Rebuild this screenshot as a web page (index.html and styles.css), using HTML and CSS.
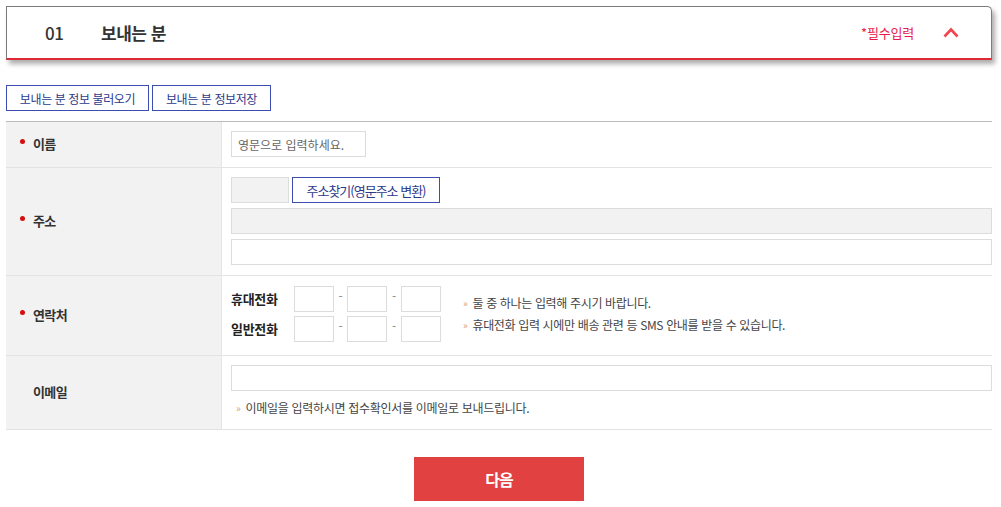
FILE: index.html
```html
<!DOCTYPE html>
<html lang="ko">
<head>
<meta charset="utf-8">
<title>보내는 분</title>
<link rel="stylesheet" href="styles.css">
</head>
<body>
<div class="page">
  <div class="sec-head">
    <span class="sec-num">01</span>
    <span class="sec-title">보내는 분</span>
    <span class="req">*필수입력</span>
    <svg class="chev" width="16" height="11" viewBox="0 0 16 11"><polyline points="1.5,9.5 8,2.5 14.5,9.5" fill="none" stroke="#f0464f" stroke-width="2.6"/></svg>
  </div>

  <div class="tools">
    <button class="btn-line">보내는 분 정보 불러오기</button>
    <button class="btn-line">보내는 분 정보저장</button>
  </div>

  <div class="form">
    <div class="row">
      <div class="th"><span class="dot"></span>이름</div>
      <div class="td">
        <input class="inp name" type="text" placeholder="영문으로 입력하세요.">
      </div>
    </div>
    <div class="row">
      <div class="th"><span class="dot"></span>주소</div>
      <div class="td stack">
        <div class="zip-line">
          <input class="inp zip gray" type="text">
          <button class="btn-line find">주소찾기(영문주소 변환)</button>
        </div>
        <input class="inp full gray" type="text">
        <input class="inp full" type="text">
      </div>
    </div>
    <div class="row">
      <div class="th"><span class="dot"></span>연락처</div>
      <div class="td phone-td">
        <div class="phones">
          <div class="ph-line">
            <span class="ph-label">휴대전화</span>
            <input class="inp ph" type="text"><span class="dash">-</span><input class="inp ph" type="text"><span class="dash">-</span><input class="inp ph" type="text">
          </div>
          <div class="ph-line">
            <span class="ph-label">일반전화</span>
            <input class="inp ph" type="text"><span class="dash">-</span><input class="inp ph" type="text"><span class="dash">-</span><input class="inp ph" type="text">
          </div>
        </div>
        <ul class="notes">
          <li>둘 중 하나는 입력해 주시기 바랍니다.</li>
          <li>휴대전화 입력 시에만 배송 관련 등 SMS 안내를 받을 수 있습니다.</li>
        </ul>
      </div>
    </div>
    <div class="row">
      <div class="th nodot">이메일</div>
      <div class="td email-td">
        <input class="inp full" type="text">
        <ul class="notes email-note">
          <li>이메일을 입력하시면 접수확인서를 이메일로 보내드립니다.</li>
        </ul>
      </div>
    </div>
  </div>

  <div class="actions">
    <button class="btn-next">다음</button>
  </div>
</div>
</body>
</html>
```

FILE: styles.css
```css
* { box-sizing: border-box; }
html, body { margin: 0; padding: 0; background: #fff; }
body {
  font-family: "Noto Sans CJK KR", "Noto Sans", sans-serif;
  color: #333;
  font-size: 12px;
  letter-spacing: -0.4px;
}
.page {
  width: 1001px;
  padding: 6px 9px 0 6px;
}
.sec-head {
  height: 54px;
  border: 1px solid #7c7c7c;
  border-bottom: 2px solid #dd2a36;
  border-radius: 0 5px 0 0;
  box-shadow: 3px 4px 5px rgba(0,0,0,0.33);
  display: flex;
  align-items: center;
  padding: 0 32px 0 38px;
  background: #fff;
}
.sec-num {
  font-size: 17px;
  font-weight: 500;
  color: #333;
  letter-spacing: -0.5px;
  width: 56px;
}
.sec-title {
  font-size: 17px;
  font-weight: 700;
  color: #333;
  letter-spacing: -0.5px;
}
.req {
  margin-left: auto;
  font-size: 13px;
  color: #e8194a;
  letter-spacing: -0.2px;
  margin-right: 29px;
}
.chev { display: block; margin-top: -1px; }

.tools {
  margin-top: 25px;
  display: flex;
  gap: 3px;
}
.btn-line {
  height: 26px;
  border: 1px solid #3c4db2;
  background: #fff;
  color: #2c3a8c;
  font-family: inherit;
  font-size: 12px;
  letter-spacing: -0.4px;
  padding: 0;
  cursor: pointer;
}
.tools .btn-line:first-child { width: 143px; }
.tools .btn-line:last-child { width: 119px; }

.form {
  margin-top: 10px;
  border-top: 1px solid #bbb;
  width: 986px;
}
.row {
  display: grid;
  grid-template-columns: 216px 1fr;
  border-bottom: 1px solid #e3e3e3;
}
.th {
  background: #f2f2f2;
  border-right: 1px solid #e5e5e5;
  display: flex;
  align-items: center;
  padding-left: 14px;
  padding-bottom: 3px;
  font-size: 13px;
  font-weight: 700;
  color: #333;
  letter-spacing: -0.6px;
}
.dot {
  width: 5px;
  height: 5px;
  border-radius: 50%;
  background: #d40f0f;
  margin-right: 8px;
  margin-top: -3px;
}
.th.nodot { padding-left: 27px; }
.td {
  padding: 9px 0 10px 9px;
}
.inp {
  display: block;
  height: 26px;
  border: 1px solid #dcdcdc;
  background: #fff;
  font-family: inherit;
  font-size: 12px;
  letter-spacing: 0;
  color: #333;
  padding: 0 6px;
  outline: none;
}
.inp::placeholder { color: #666; }
.inp.gray { background: #f2f2f2; }
.inp.name { width: 135px; }
.inp.full { width: 761px; }
.stack { display: flex; flex-direction: column; gap: 5px; }
.zip-line { display: flex; gap: 3px; }
.inp.zip { width: 58px; }
.btn-line.find { width: 148px; font-size: 13px; letter-spacing: -1px; }

.phone-td {
  padding: 10px 0 13px 9px;
  display: flex;
  align-items: center;
}
.phones { display: flex; flex-direction: column; gap: 4px; }
.ph-line { display: flex; align-items: center; }
.ph-label {
  width: 63px;
  font-size: 13px;
  font-weight: 700;
  color: #222;
  letter-spacing: -0.3px;
  padding-bottom: 2px;
}
.inp.ph { width: 40px; }
.dash {
  width: 14px;
  text-align: center;
  color: #888;
  font-size: 12px;
  margin-top: -7px;
}
.ph-line .dash:nth-of-type(2) { width: 13px; }

.notes {
  list-style: none;
  margin: 0 0 0 22px;
  padding: 0;
  color: #444;
  font-size: 12px;
  line-height: 21px;
  letter-spacing: -0.35px;
}
.notes li::before {
  content: "\00BB";
  color: #d6a57c;
  font-size: 10px;
  margin-right: 5px;
  position: relative;
  top: -1px;
}
.email-td { padding: 9px 0 10px 9px; }
.email-note { margin: 7px 0 0 5px; line-height: 20px; letter-spacing: -0.3px; }

.actions {
  display: flex;
  justify-content: center;
  margin-top: 27px;
  width: 986px;
}
.btn-next {
  width: 170px;
  height: 44px;
  border: none;
  background: #e24141;
  color: #fff;
  font-family: inherit;
  font-size: 16px;
  font-weight: 700;
  letter-spacing: -1px;
  cursor: pointer;
}
```
